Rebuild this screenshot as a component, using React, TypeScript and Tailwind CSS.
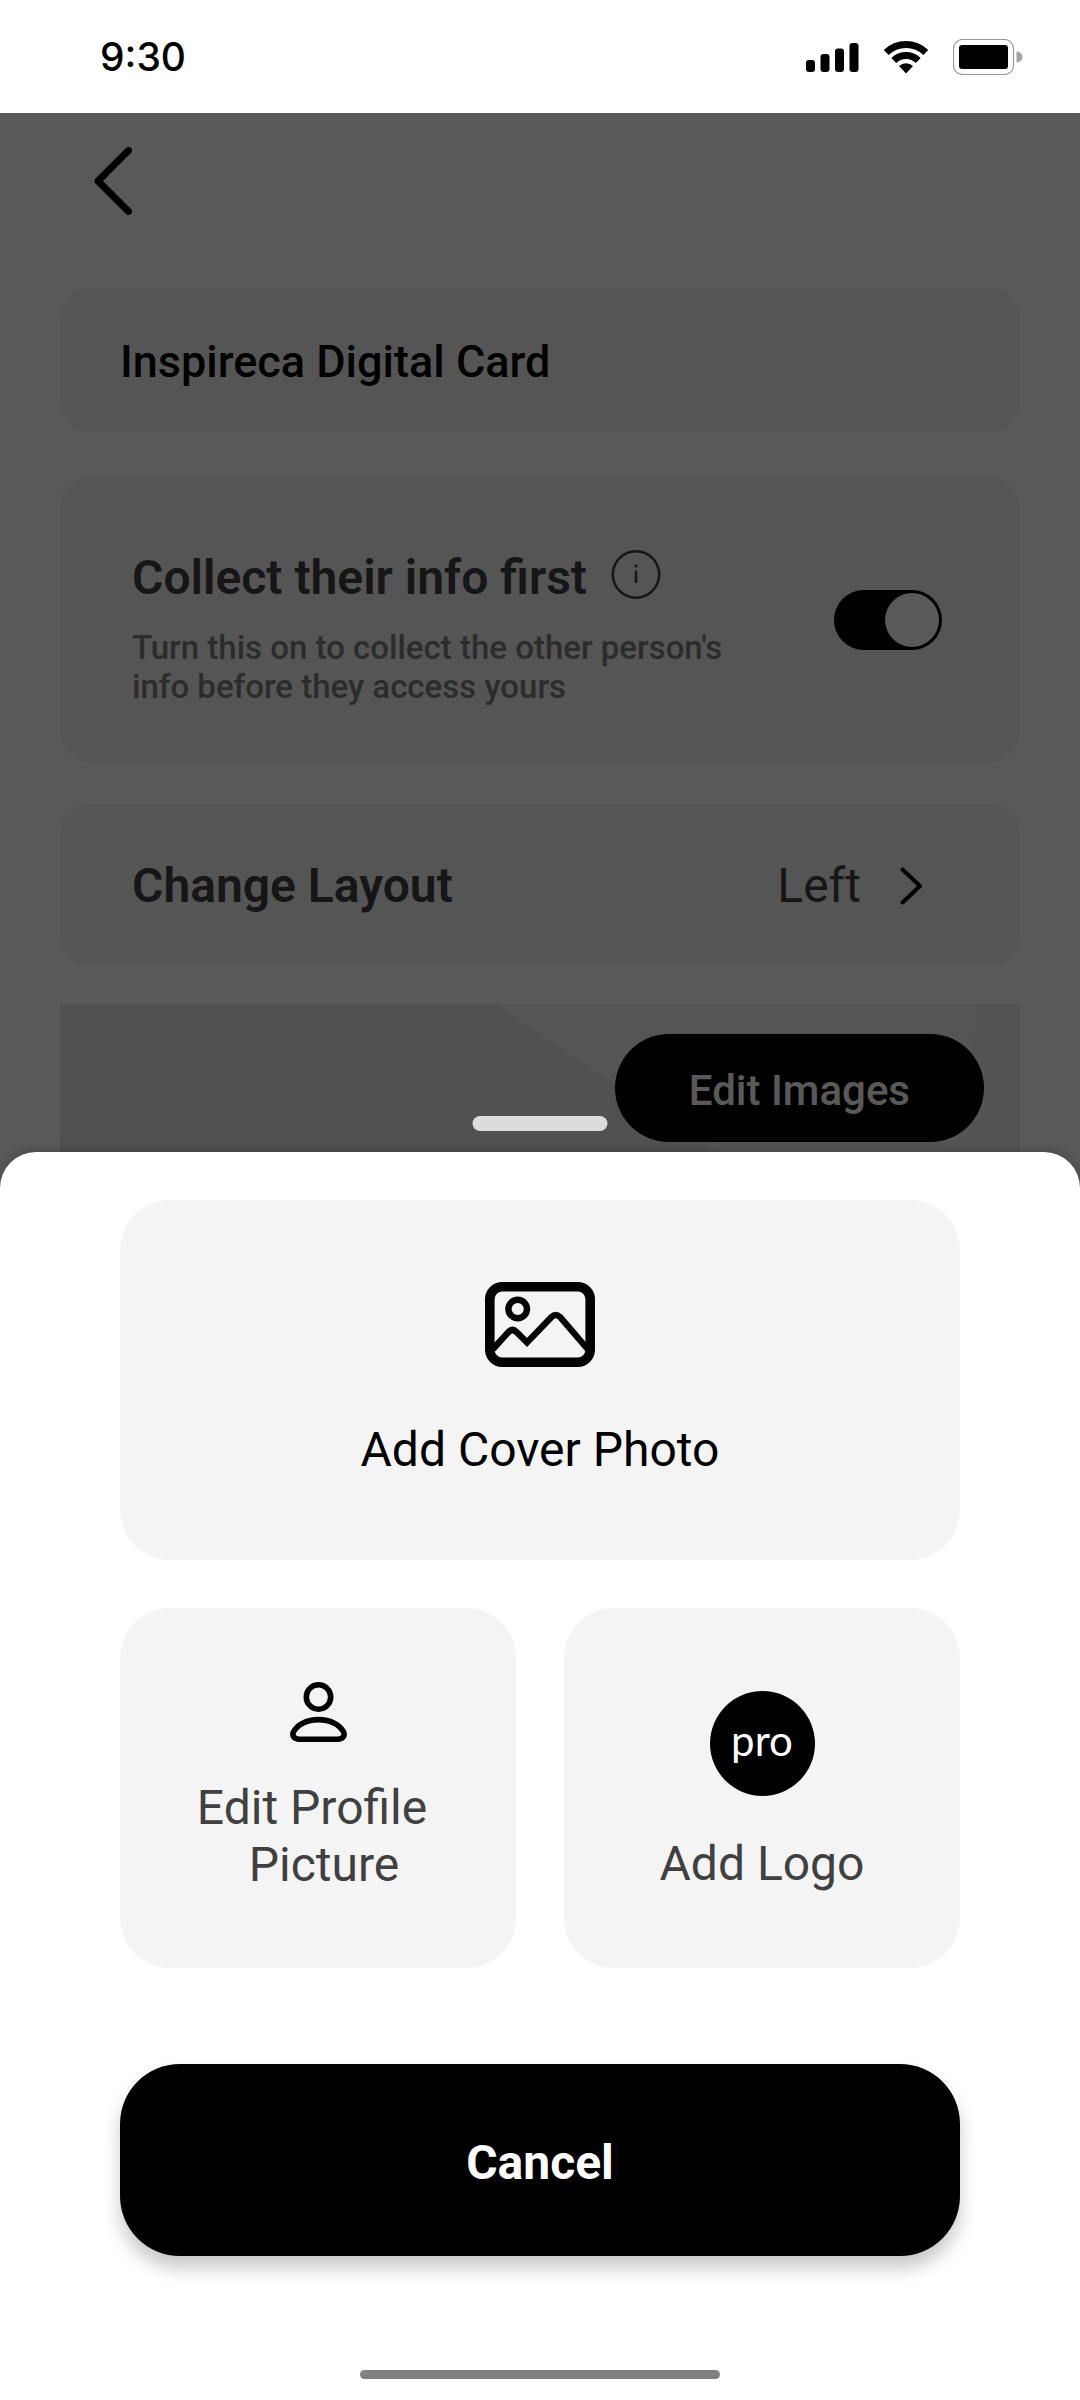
import { useState } from "react";
import type { ReactNode } from "react";

function StatusBar() {
  return (
    <div className="flex h-[113px] items-center justify-between bg-white pl-[100px] pr-[57px]">
      <span className="font-['Inter',sans-serif] text-[39px] leading-[48px] font-medium text-black">
        9:30
      </span>
      <div className="flex items-center gap-6">
        <svg width="53" height="30" viewBox="0 0 53 30">
          <rect x="0" y="18" width="9" height="12" rx="3" />
          <rect x="14.5" y="12" width="9" height="18" rx="3" />
          <rect x="29" y="6.5" width="9" height="23.5" rx="3" />
          <rect x="43.5" y="1" width="9" height="29" rx="3" />
        </svg>
        <svg width="46" height="34" viewBox="0 0 46 34">
          <path d="M3.2 12.5A28.5 28.5 0 0 1 42.8 12.5" fill="none" stroke="#000" strokeWidth="7" />
          <path d="M10.8 20.4A17.5 17.5 0 0 1 35.2 20.4" fill="none" stroke="#000" strokeWidth="7" />
          <path d="M16 26A10 10 0 0 1 30 26L23 33.5Z" />
        </svg>
        <svg width="70" height="36" viewBox="0 0 70 36">
          <rect x="0.5" y="0.5" width="60" height="35" rx="9" fill="none" stroke="#999" strokeWidth="1.2" />
          <rect x="6" y="6" width="49" height="24" rx="3" />
          <path d="M63.5 12.5C67.5 13 69.5 15.5 69.5 18C69.5 20.5 67.5 23 63.5 23.5Z" fill="#a3a3a3" />
        </svg>
      </div>
    </div>
  );
}

function InfoIcon() {
  return (
    <svg width="50" height="50" viewBox="0 0 50 50" fill="none" stroke="#404040">
      <circle cx="25" cy="24.5" r="23.2" strokeWidth="2.5" />
      <path d="M25 20.5V33" strokeWidth="2.5" />
      <circle cx="25" cy="16" r="1.6" fill="#404040" stroke="none" />
    </svg>
  );
}

function PictureIcon() {
  return (
    <svg width="110" height="85" viewBox="0 0 110 85" fill="none" stroke="#000">
      <rect x="4.8" y="4.8" width="100.4" height="75.4" rx="12.5" strokeWidth="9.6" />
      <circle cx="32.7" cy="27" r="9.3" strokeWidth="6.4" />
      <path
        d="M8 67L23.5 50Q27.5 46 31.5 50L42 60.5L66.5 35Q70.7 31 75 35L103 67.5"
        strokeWidth="6.4"
      />
    </svg>
  );
}

function PersonIcon() {
  return (
    <svg width="57" height="60" viewBox="0 0 57 60" fill="none" stroke="#000" strokeWidth="5.6">
      <circle cx="28.5" cy="15" r="12.2" />
      <path d="M9 57.2H48C52.5 57.2 55.3 54 53.6 50C49.5 42.3 40 37.6 28.5 37.6C17 37.6 7.5 42.3 3.4 50C1.7 54 4.5 57.2 9 57.2Z" />
    </svg>
  );
}

interface TileProps {
  icon: ReactNode;
  children: ReactNode;
  className?: string;
}

function Tile({ icon, children, className = "" }: TileProps) {
  return (
    <button
      type="button"
      className={`flex min-h-[360px] flex-col items-center justify-center rounded-[50px] bg-[#f4f4f4] text-[48px] leading-[57px] ${className}`}
    >
      {icon}
      <span>{children}</span>
    </button>
  );
}

export default function App() {
  const [cardName, setCardName] = useState("Inspireca Digital Card");
  const [collectInfo, setCollectInfo] = useState(true);

  return (
    <div className="flex min-h-screen flex-col overflow-hidden bg-white font-['Roboto',sans-serif]">
      <StatusBar />

      <div className="relative flex flex-1 flex-col">
        {/* Card editor */}
        <header className="flex h-[175px] items-start px-[94px] pt-[34px]">
          <button type="button" aria-label="Back">
            <svg width="38" height="68" viewBox="0 0 38 68" fill="none" stroke="#000" strokeWidth="7">
              <path d="M34.5 3.5L4 34L34.5 64.5" strokeLinecap="round" strokeLinejoin="round" />
            </svg>
          </button>
        </header>

        <main className="flex flex-col px-[60px]">
          <input
            type="text"
            aria-label="Card name"
            value={cardName}
            onChange={(e) => setCardName(e.target.value)}
            className="h-36 w-full rounded-[30px] bg-[#f3f3f3] px-[60px] pt-[3px] text-[45px] font-medium text-black outline-none"
          />

          <section className="mt-[45px] flex items-center justify-between rounded-[30px] bg-[#f3f3f3] pr-[78px] pl-[72px]">
            <div className="pt-[73px] pb-[56px]">
              <div className="flex h-[56px] items-start gap-6">
                <label htmlFor="collect" className="text-[48px] leading-[56px] font-semibold text-[#404040]">
                  Collect their info first
                </label>
                <button type="button" aria-label="More information">
                  <InfoIcon />
                </button>
              </div>
              <p className="mt-[22px] text-[33px] leading-[39px] font-medium text-[#7e7e7e]">
                Turn this on to collect the other person's
                <br />
                info before they access yours
              </p>
            </div>
            <input
              id="collect"
              type="checkbox"
              role="switch"
              checked={collectInfo}
              onChange={(e) => setCollectInfo(e.target.checked)}
              className="flex h-[60px] w-[108px] shrink-0 appearance-none items-center rounded-full bg-gray-400 p-[3px] before:size-[54px] before:rounded-full before:bg-white checked:justify-end checked:bg-black"
            />
          </section>

          <button
            type="button"
            className="mt-[42px] flex h-[162px] items-center justify-between rounded-[30px] bg-[#f3f3f3] pt-[2px] pr-[97px] pl-[72px] text-[48px] leading-[56px] text-[#404040]"
          >
            <span className="font-semibold">Change Layout</span>
            <span className="flex items-center gap-[39px]">
              Left
              <svg width="23" height="38" viewBox="0 0 23 38" fill="none" stroke="#000" strokeWidth="4">
                <path d="M2.5 2.5L20 19L2.5 35.5" strokeLinecap="round" strokeLinejoin="round" />
              </svg>
            </span>
          </button>

          {/* Cover */}
          <div className="relative mt-[38px] flex h-[148px] justify-end overflow-hidden bg-[#f3f3f3] pt-[30px] pr-9">
            <svg
              className="absolute inset-0 size-full"
              viewBox="0 0 960 148"
              preserveAspectRatio="none"
            >
              <path d="M0 0H190L180 148H0Z" fill="#e7e7e7" />
              <path d="M190 0H435L660 148H180Z" fill="#e9e9e9" />
              <path d="M920 0H960V148H890Z" fill="#f0f0f0" />
            </svg>
            <button
              type="button"
              className="relative h-[108px] rounded-full bg-black px-[74px] pt-[5px] text-[42px] font-medium text-white"
            >
              Edit Images
            </button>
          </div>
        </main>

        <div className="absolute inset-0 bg-black/65" />

        {/* Bottom sheet */}
        <div
          role="dialog"
          aria-label="Edit images"
          className="relative flex flex-1 flex-col rounded-t-[36px] bg-white px-[120px] pt-12 pb-[21px] shadow-[0_0_12px_rgba(0,0,0,0.25)]"
        >
          <div className="absolute -top-9 left-1/2 h-[15px] w-[135px] -translate-x-1/2 rounded-full bg-[#dcdcdc]" />

          <div className="grid grid-cols-2 gap-12">
            <Tile icon={<PictureIcon />} className="col-span-2 gap-[54px] text-black">
              Add Cover Photo
            </Tile>
            <Tile icon={<PersonIcon />} className="gap-[37px] pb-[2px] text-[#404040]">
              Edit Profile&nbsp;
              <br />
              &nbsp;Picture
            </Tile>
            <Tile
              icon={
                <span className="flex size-[105px] items-center justify-center rounded-full bg-black pb-2 font-['Lato',sans-serif] text-[42px] leading-[48px] text-white">
                  pro
                </span>
              }
              className="gap-[39px] pt-[7px] text-[#404040]"
            >
              Add Logo
            </Tile>
          </div>

          <button
            type="button"
            className="mt-24 h-48 rounded-[60px] bg-black pt-[5px] text-[48px] font-bold text-white shadow-[0_12px_18px_rgba(0,0,0,0.22)]"
          >
            Cancel
          </button>

          <div className="mx-auto mt-auto h-[9px] w-[360px] rounded-full bg-[#808080]" />
        </div>
      </div>
    </div>
  );
}
